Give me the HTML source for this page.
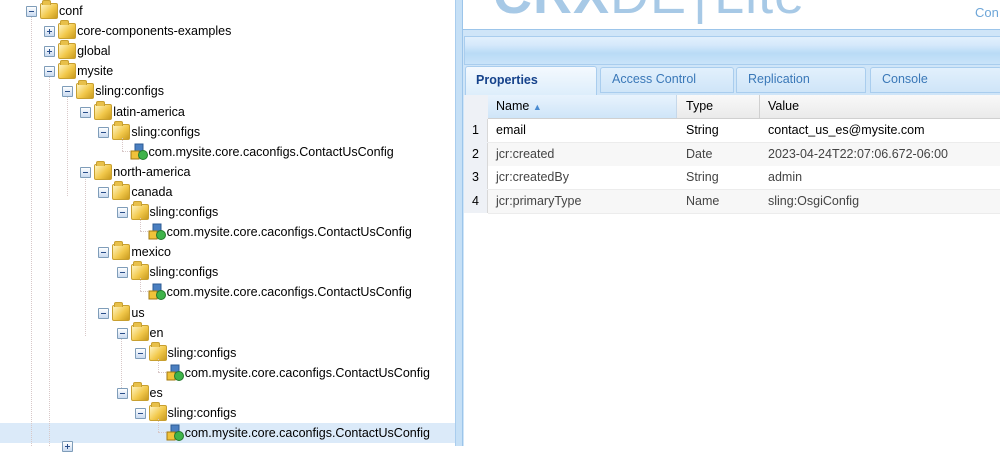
<!DOCTYPE html>
<html><head><style>
body{margin:0;width:1000px;height:446px;overflow:hidden;background:#fff;font-family:"Liberation Sans",Arial,sans-serif;position:relative;font-size:12.5px;color:#000}
.a{position:absolute}
.row{position:absolute;height:20px;line-height:20px;white-space:nowrap}
.tg{position:absolute;width:9px;height:9px;border:1px solid #7f9db9;background:linear-gradient(#fff,#c9daf0);top:5px;border-radius:1px}
.tg:after{content:"";position:absolute;left:2px;top:4px;width:5px;height:1px;background:#2a4f8a}
.tg.p:before{content:"";position:absolute;left:4px;top:2px;width:1px;height:5px;background:#2a4f8a}
.fd{position:absolute;top:2px;width:16px;height:14px;border-radius:2px;background:linear-gradient(135deg,#fff6c8,#f2c94c 55%,#c99a1e);border:1px solid #c8a030}
.fd:before{content:"";position:absolute;left:1px;top:-4px;width:7px;height:4px;background:#e8c04a;border:1px solid #c8a030;border-bottom:none;border-radius:2px 2px 0 0}
.nd{position:absolute;top:1px;width:18px;height:18px}
.t{position:absolute}
.vl{position:absolute;width:0;border-left:1px dotted #d8c8c8}
</style></head><body>
<div class="a" style="left:0;top:423px;width:455px;height:20px;background:#dbeaf9"></div>
<div class="vl" style="left:31px;top:16px;height:430px"></div>
<div class="vl" style="left:49px;top:76px;height:370px"></div>
<div class="vl" style="left:67px;top:96px;height:100px"></div>
<div class="vl" style="left:85px;top:176px;height:160px"></div>
<div class="vl" style="left:121px;top:336px;height:60px"></div>
<div id="tree"></div>
<div class="a" style="left:455px;top:0;width:7px;height:446px;background:#c6e0f6;border-left:1px solid #a9cdee"></div>
<div class="a" style="left:462px;top:0;width:538px;height:29px;background:#fff;border-bottom:1px solid #9cc5ea;border-left:1px solid #9cc5ea;overflow:hidden">
 <div class="a" style="left:30px;top:-36px;font-size:54px;color:#a7c9e6;white-space:nowrap;letter-spacing:1px"><b>CRX</b>DE<span style="font-weight:100;margin:0 6px">|</span>Lite</div>
 <div class="a" style="left:512px;top:5px;color:#6ea6d8;font-size:13px">Con</div>
</div>
<div class="a" style="left:462px;top:30px;width:538px;height:416px;background:#cfe5f8;border-left:1px solid #9cc5ea"></div>
<div class="a" style="left:464px;top:36px;width:536px;height:27px;background:linear-gradient(#e2f0fc,#d5e9fb 30%,#b9dbf6 60%,#c9e3f9);border:1px solid #a9cdee;border-right:none"></div>
<div class="a" style="left:464px;top:95px;width:536px;height:351px;background:#fff"></div>
<div class="a" style="left:465px;top:66px;width:132px;height:29px;background:linear-gradient(#f4f9fe,#ddeefb);border:1px solid #a9cdee;border-bottom:none;border-radius:3px 3px 0 0;line-height:26px;font-weight:bold;color:#15428b;padding-left:10px;box-sizing:border-box">Properties</div>
<div class="a" style="left:600px;top:67px;width:134px;height:26px;background:linear-gradient(#e2f0fc,#cfe5f8);border:1px solid #a9cdee;border-radius:3px 3px 0 0;line-height:22px;color:#3a78b8;padding-left:11px;box-sizing:border-box">Access Control</div>
<div class="a" style="left:736px;top:67px;width:130px;height:26px;background:linear-gradient(#e2f0fc,#cfe5f8);border:1px solid #a9cdee;border-radius:3px 3px 0 0;line-height:22px;color:#3a78b8;padding-left:11px;box-sizing:border-box">Replication</div>
<div class="a" style="left:870px;top:67px;width:132px;height:26px;background:linear-gradient(#e2f0fc,#cfe5f8);border:1px solid #a9cdee;border-radius:3px 3px 0 0;line-height:22px;color:#3a78b8;padding-left:11px;box-sizing:border-box">Console</div>
<div class="a" style="left:464px;top:95px;width:536px;height:23px;background:linear-gradient(#f9f9f9,#eaeaea);border-bottom:1px solid #d0d0d0"></div>
<div class="a" style="left:464px;top:95px;width:24px;height:118px;background:#eef1f6"></div>
<div class="a" style="left:488px;top:95px;width:188px;height:23px;background:linear-gradient(#e8f3fd,#cfe5f8);border-right:1px solid #c6d8ea"></div>
<div class="a" style="left:496px;top:95px;line-height:23px">Name <span style="color:#4a8bd0;font-size:9px">▲</span></div>
<div class="a" style="left:677px;top:95px;width:82px;height:23px;border-right:1px solid #d0d0d0"></div>
<div class="a" style="left:686px;top:95px;line-height:23px">Type</div>
<div class="a" style="left:768px;top:95px;line-height:23px">Value</div>
<div id="grid"></div>
<script>
var tree=[["conf",0,"m"],["core-components-examples",1,"p"],["global",1,"p"],["mysite",1,"m"],["sling:configs",2,"m"],["latin-america",3,"m"],["sling:configs",4,"m"],["com.mysite.core.caconfigs.ContactUsConfig",5,"l"],["north-america",3,"m"],["canada",4,"m"],["sling:configs",5,"m"],["com.mysite.core.caconfigs.ContactUsConfig",6,"l"],["mexico",4,"m"],["sling:configs",5,"m"],["com.mysite.core.caconfigs.ContactUsConfig",6,"l"],["us",4,"m"],["en",5,"m"],["sling:configs",6,"m"],["com.mysite.core.caconfigs.ContactUsConfig",7,"l"],["es",5,"m"],["sling:configs",6,"m"],["com.mysite.core.caconfigs.ContactUsConfig",7,"l"]];
var h="";
tree.forEach(function(r,i){var y=1+i*20.1,x=26+18.1*r[1];
if(r[2]=="l"){h+='<div class="row" style="top:'+y+'px;left:0">'+
'<div class="vl" style="left:'+(x+5)+'px;top:-4px;height:13px"></div><div class="a" style="left:'+(x+5)+'px;top:9px;width:8px;border-top:1px dotted #d8c8c8"></div>'+
'<svg class="nd" style="left:'+(x+13)+'px" viewBox="0 0 18 18"><rect x="5" y="1" width="8" height="7" fill="#4a7fc1" stroke="#2c5b94"/><rect x="1" y="8" width="8" height="8" fill="#f0c23a" stroke="#a37a12"/><circle cx="13" cy="12" r="4.5" fill="#3fb34a" stroke="#237a2a"/></svg>'+
'<span class="t" style="left:'+(x+32)+'px">'+r[0]+'</span></div>';}
else{h+='<div class="row" style="top:'+y+'px;left:0"><div class="tg '+(r[2]=="p"?"p":"")+'" style="left:'+x+'px"></div><div class="fd" style="left:'+(x+14)+'px"></div><span class="t" style="left:'+(x+33)+'px">'+r[0]+'</span></div>';}
});
document.getElementById("tree").innerHTML=h+'<div class="tg p" style="left:62px;top:441px"></div>';
var g=[["1","email","String","contact_us_es@mysite.com","#000","#fff"],["2","jcr:created","Date","2023-04-24T22:07:06.672-06:00","#444","#f7f7f7"],["3","jcr:createdBy","String","admin","#444","#fff"],["4","jcr:primaryType","Name","sling:OsgiConfig","#444","#f7f7f7"]];
var s="";g.forEach(function(r,i){var y=119+i*23.5;
s+='<div class="a" style="left:488px;top:'+y+'px;width:512px;height:23px;background:'+r[5]+';border-bottom:1px solid #ececec"></div>'+
'<div class="a" style="left:464px;top:'+y+'px;width:23px;height:23px;line-height:23px;text-align:center;background:#eef1f6;border-right:1px solid #d8d8d8">'+r[0]+'</div>'+
'<div class="a" style="left:496px;top:'+y+'px;line-height:23px;color:'+r[4]+'">'+r[1]+'</div>'+
'<div class="a" style="left:686px;top:'+y+'px;line-height:23px;color:'+r[4]+'">'+r[2]+'</div>'+
'<div class="a" style="left:768px;top:'+y+'px;line-height:23px;color:'+r[4]+'">'+r[3]+'</div>';});
document.getElementById("grid").innerHTML=s;
</script>
</body></html>
